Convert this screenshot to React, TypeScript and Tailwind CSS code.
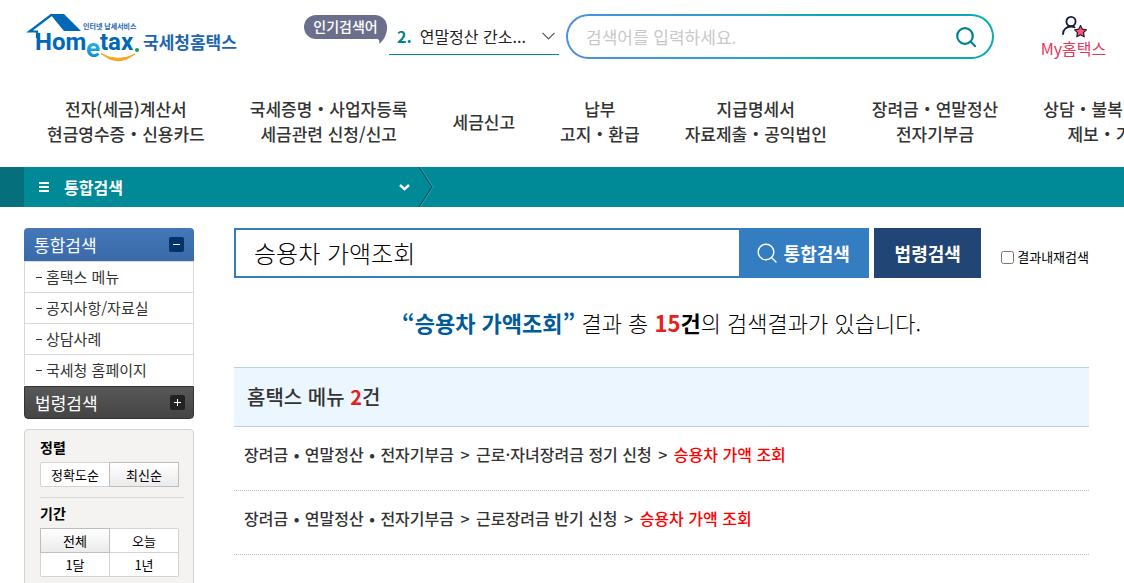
import { Fragment, useState } from 'react';

const navItems: string[][] = [
  ['전자(세금)계산서', '현금영수증・신용카드'],
  ['국세증명・사업자등록', '세금관련 신청/신고'],
  ['세금신고'],
  ['납부', '고지・환급'],
  ['지급명세서', '자료제출・공익법인'],
  ['장려금・연말정산', '전자기부금'],
  ['상담・불복・고충', '제보・기타'],
];

const sideMenu = ['홈택스 메뉴', '공지사항/자료실', '상담사례', '국세청 홈페이지'];

const results = [
  { category: ['장려금', '연말정산', '전자기부금'], page: '근로·자녀장려금 정기 신청', match: '승용차 가액 조회' },
  { category: ['장려금', '연말정산', '전자기부금'], page: '근로장려금 반기 신청', match: '승용차 가액 조회' },
];

const Logo = () => (
  <a href="#" aria-label="Hometax 국세청홈택스" className="block shrink-0">
    <svg width="212" height="54" viewBox="26 10 212 54" className="block">
      <defs>
        <linearGradient id="logo-e" x1="0" y1="0" x2="0" y2="1">
          <stop offset="0" stopColor="#35c8f0" />
          <stop offset="1" stopColor="#0a7fd0" />
        </linearGradient>
      </defs>
      <path d="M50 14H64L81 31H64Z" fill="#0068b7" />
      <path d="M52 14.500L29.500 31.500H37V38" fill="none" stroke="#0068b7" strokeWidth="2.200" />
      <path d="M101 53.500Q118 68 135 54Q118 63 101 53.500Z" fill="#f5a623" stroke="#f5a623" strokeWidth="1" />
      <circle cx="137" cy="50" r="2" fill="#12a04a" />
      <g fontFamily="Roboto, sans-serif" fontWeight="700" fontSize="24" fill="#0068b7">
        <text x="35" y="50">Hom</text>
        <text x="86" y="57" fontSize="26" fill="url(#logo-e)">e</text>
        <text x="100" y="50">tax</text>
      </g>
      <g fontFamily="'Noto Sans CJK KR', sans-serif" fontWeight="700" fill="#1d65b0">
        <text x="83" y="29" fontSize="7">인터넷 납세서비스</text>
        <text x="143" y="49" fontSize="17">국세청홈택스</text>
      </g>
    </svg>
  </a>
);

const SearchIcon = ({ className, strokeWidth }: { className: string; strokeWidth: number }) => (
  <svg viewBox="0 0 20 20" className={className} fill="none" stroke="currentColor" strokeWidth={strokeWidth} strokeLinecap="round">
    <circle cx="9" cy="9" r="7.800" />
    <path d="M14.500 14.500L19 19" />
  </svg>
);

const MyIcon = () => (
  <svg width="26" height="24" viewBox="0 0 26 24" fill="none">
    <circle cx="10" cy="7.500" r="4.600" stroke="#15173a" strokeWidth="1.800" />
    <path d="M2 20C2 15.500 5.500 12.500 10 12.500C11.500 12.500 12.600 12.800 13.600 13.300" stroke="#15173a" strokeWidth="1.800" strokeLinecap="round" />
    <path
      d="M19.500 11.500L21.400 15.200L25.400 15.800L22.500 18.600L23.200 22.800L19.500 20.800L15.800 22.800L16.500 18.600L13.600 15.800L17.600 15.200Z"
      fill="#f8567a"
      stroke="#2b1a2e"
      strokeWidth="1.200"
      strokeLinejoin="round"
    />
  </svg>
);

const Header = () => (
  <header>
    <div className="flex items-start pl-[26px] pr-[17px]">
      <div className="mt-[10px]">
        <Logo />
      </div>

      {/* Popular keywords */}
      <div className="relative ml-[66px] mt-[15px] h-6 w-[83px] shrink-0 rounded-full bg-[#6c6f8c] text-center text-[14px] leading-[23px] font-medium text-white">
        인기검색어
        <svg width="12" height="18" viewBox="0 0 12 18" className="absolute right-0 top-3">
          <path d="M12 0C12 8 9 13 4 17C5 14 4 12 1 11Z" fill="#6c6f8c" />
        </svg>
      </div>
      <button type="button" className="ml-[2px] mt-[17px] flex h-[38px] w-[170px] shrink-0 items-center border-b border-[#008a98] pl-2 pr-1 text-[16px] text-[#222]">
        <span className="font-bold text-[#00838f]">2.</span>
        <span className="ml-2 flex-1 text-left whitespace-nowrap">연말정산 간소...</span>
        <svg width="13" height="8" viewBox="0 0 13 8" fill="none" stroke="#555" strokeWidth="1.200">
          <path d="M.5 .8L6.500 6.800L12.500 .8" />
        </svg>
      </button>

      <div className="ml-[7px] mt-[14px] h-[45px] min-w-0 flex-1 rounded-full bg-linear-to-r from-[#4a90e2] to-[#0aaab8] to-60% p-[2px]">
        <form className="flex h-full items-center rounded-full bg-white pl-[18px] pr-4" onSubmit={(e) => e.preventDefault()}>
          <input
            type="text"
            aria-label="검색어"
            placeholder="검색어를 입력하세요."
            className="min-w-0 flex-1 text-[17px] outline-none placeholder:text-[#c8c8c8]"
          />
          <button type="submit" aria-label="검색">
            <SearchIcon className="size-5 text-[#00838f]" strokeWidth={2.2} />
          </button>
        </form>
      </div>

      <a href="#" className="ml-[46px] mt-[14px] flex w-[67px] shrink-0 flex-col items-center text-[16px] leading-5 text-[#e8365a]">
        <MyIcon />
        My홈택스
      </a>
    </div>

    <nav className="overflow-hidden pl-[47px] pt-8 pb-[21px]">
      <ul className="flex items-center gap-[45px]">
        {navItems.map((lines) => (
          <li key={lines[0]} className="shrink-0">
            <a href="#" className="block text-center text-[17px] leading-[25px] font-medium whitespace-nowrap text-[#333]">
              {lines.map((line) => (
                <span key={line} className="block">{line}</span>
              ))}
            </a>
          </li>
        ))}
      </ul>
    </nav>
  </header>
);

const LocationBar = () => (
  <div className="flex h-10 bg-[#008a98] text-white">
    <div className="w-6 bg-[#056f7b]" />
    <button type="button" className="flex w-[394px] items-center pl-[15px] pr-2">
      <svg width="10" height="10" viewBox="0 0 10 10" fill="currentColor">
        <path d="M0 0H10V2H0ZM0 4H10V6H0ZM0 8H10V10H0Z" />
      </svg>
      <span className="ml-[15px] flex-1 text-left text-[16px] font-bold">통합검색</span>
      <svg width="11" height="7" viewBox="0 0 11 7" fill="none" stroke="currentColor" strokeWidth="2.400">
        <path d="M1 1L5.500 5.200L10 1" />
      </svg>
    </button>
    <svg width="16" height="40" viewBox="0 0 16 40" fill="none">
      <path d="M1 0L14 20L1 40" stroke="#04525c" strokeWidth="1.200" />
      <path d="M2.200 0L15.200 20L2.200 40" stroke="#3ba6b1" strokeWidth=".8" />
    </svg>
  </div>
);

interface OptionGroupProps {
  label: string;
  options: string[];
  selected: string;
  onSelect: (value: string) => void;
}

const OptionGroup = ({ label, options, selected, onSelect }: OptionGroupProps) => (
  <div role="group" aria-label={label}>
    <h3 className="text-[14px] leading-5 font-bold text-black">{label}</h3>
    <div className="mt-[5px] grid w-[139px] grid-cols-2 gap-px rounded-xs border border-[#d3d3d3] bg-[#d3d3d3]">
      {options.map((option) => (
        <button
          key={option}
          type="button"
          onClick={() => onSelect(option)}
          className={
            option === selected
              ? 'h-[23px] bg-linear-to-b from-white to-[#ebebeb] text-[13px] leading-[23px] text-black outline outline-[#bdbdbd]'
              : 'h-[23px] bg-white text-[13px] leading-[23px] text-black'
          }
        >
          {option}
        </button>
      ))}
    </div>
  </div>
);

const Sidebar = () => {
  const [sort, setSort] = useState('최신순');
  const [period, setPeriod] = useState('전체');

  return (
    <aside className="w-[170px] shrink-0">
      <button type="button" className="flex h-[33px] w-full items-center justify-between rounded-t-sm bg-linear-to-b from-[#4478b9] to-[#3a69a8] pl-[10px] pr-[10px] text-[17px] text-white">
        통합검색
        <svg width="15" height="15" viewBox="0 0 15 15">
          <rect width="15" height="15" rx="2" fill="#02336b" />
          <path d="M4 7.500H11" stroke="#fff" />
        </svg>
      </button>
      <ul className="border-x border-[#d9d9d9]">
        {sideMenu.map((item) => (
          <li key={item} className="h-[31px] border-t border-[#d9d9d9]">
            <a href="#" className="flex items-center pl-[11px] text-[15px] leading-[30px] text-[#333]">
              <span className="mr-1 h-px w-[6px] bg-[#333]" />
              {item}
            </a>
          </li>
        ))}
      </ul>
      <button type="button" className="mt-px flex h-[33px] w-full items-center justify-between rounded-b-sm border border-[#333] bg-linear-to-b from-[#585858] to-[#444] pl-[10px] pr-2 text-[17px] text-white">
        법령검색
        <svg width="15" height="15" viewBox="0 0 15 15">
          <rect width="15" height="15" rx="2" fill="#222" />
          <path d="M4 7.500H11M7.500 4V11" stroke="#fff" />
        </svg>
      </button>

      <div className="mt-[10px] rounded-sm border border-[#d3d3d3] bg-[#f4f3f2] px-[15px] pt-[7px] pb-4">
        <OptionGroup label="정렬" options={['정확도순', '최신순']} selected={sort} onSelect={setSort} />
        <hr className="-mr-[6px] mt-[10px] mb-[5px] border-[#d9d9d9]" />
        <OptionGroup label="기간" options={['전체', '오늘', '1달', '1년']} selected={period} onSelect={setPeriod} />
      </div>
    </aside>
  );
};

const SearchResults = () => {
  const [keyword, setKeyword] = useState('승용차 가액조회');

  return (
    <main className="min-w-0 flex-1">
      <form className="flex h-[50px]" onSubmit={(e) => e.preventDefault()}>
        <input
          type="text"
          aria-label="통합검색어"
          value={keyword}
          onChange={(e) => setKeyword(e.target.value)}
          className="min-w-0 flex-1 border-2 border-r-0 border-[#347dc0] pl-[18px] text-[24px] font-light text-black outline-none"
        />
        <button type="submit" className="flex w-[130px] shrink-0 items-center justify-center gap-[7px] bg-[#347dc0] pr-[2px] text-[18px] font-bold text-white">
          <SearchIcon className="size-5" strokeWidth={1.4} />
          통합검색
        </button>
        <button type="button" className="ml-[5px] w-[107px] shrink-0 bg-[#214675] text-[18px] font-bold text-white">
          법령검색
        </button>
        <label className="ml-5 flex shrink-0 items-center gap-[3px] pt-2 text-[13px] text-black">
          <input type="checkbox" className="size-[13px]" />
          결과내재검색
        </label>
      </form>

      <p className="mt-7 text-center text-[22px] leading-8 font-light text-black">
        <strong className="font-bold text-[#005b99]">“승용차 가액조회”</strong> 결과 총 <strong className="font-bold text-[#e8201c]">15</strong>
        <strong className="font-bold">건</strong>의 검색결과가 있습니다.
      </p>

      <h2 className="mt-[29px] border-y border-[#bccfdc] bg-[#ebf6ff] pl-[13px] text-[20px] leading-[58px] font-medium text-[#333]">
        홈택스 메뉴 <span className="font-bold text-[#e8201c]">2</span>건
      </h2>
      <ul>
        {results.map((result) => (
          <li key={result.page} className="border-b border-dotted border-[#bbb] pt-[15px] pb-6 pl-[10px]">
            <a href="#" className="block text-[16px] leading-6 font-medium text-[#333]">
              {result.category.map((name, index) => (
                <Fragment key={name}>
                  {index > 0 && <span className="mx-px"> • </span>}
                  {name}
                </Fragment>
              ))}
              <span className="mx-[2px]"> &gt; </span>
              {result.page}
              <span className="mx-[2px]"> &gt; </span>
              <span className="text-[#ff0000]">{result.match}</span>
            </a>
          </li>
        ))}
      </ul>
    </main>
  );
};

const App = () => {
  return (
    <div lang="ko" className="min-h-screen bg-white font-['Noto_Sans_CJK_KR',sans-serif]">
      <Header />
      <LocationBar />
      <div className="flex gap-10 pl-6 pr-[35px] pt-[21px]">
        <Sidebar />
        <SearchResults />
      </div>
    </div>
  );
};

export default App;
